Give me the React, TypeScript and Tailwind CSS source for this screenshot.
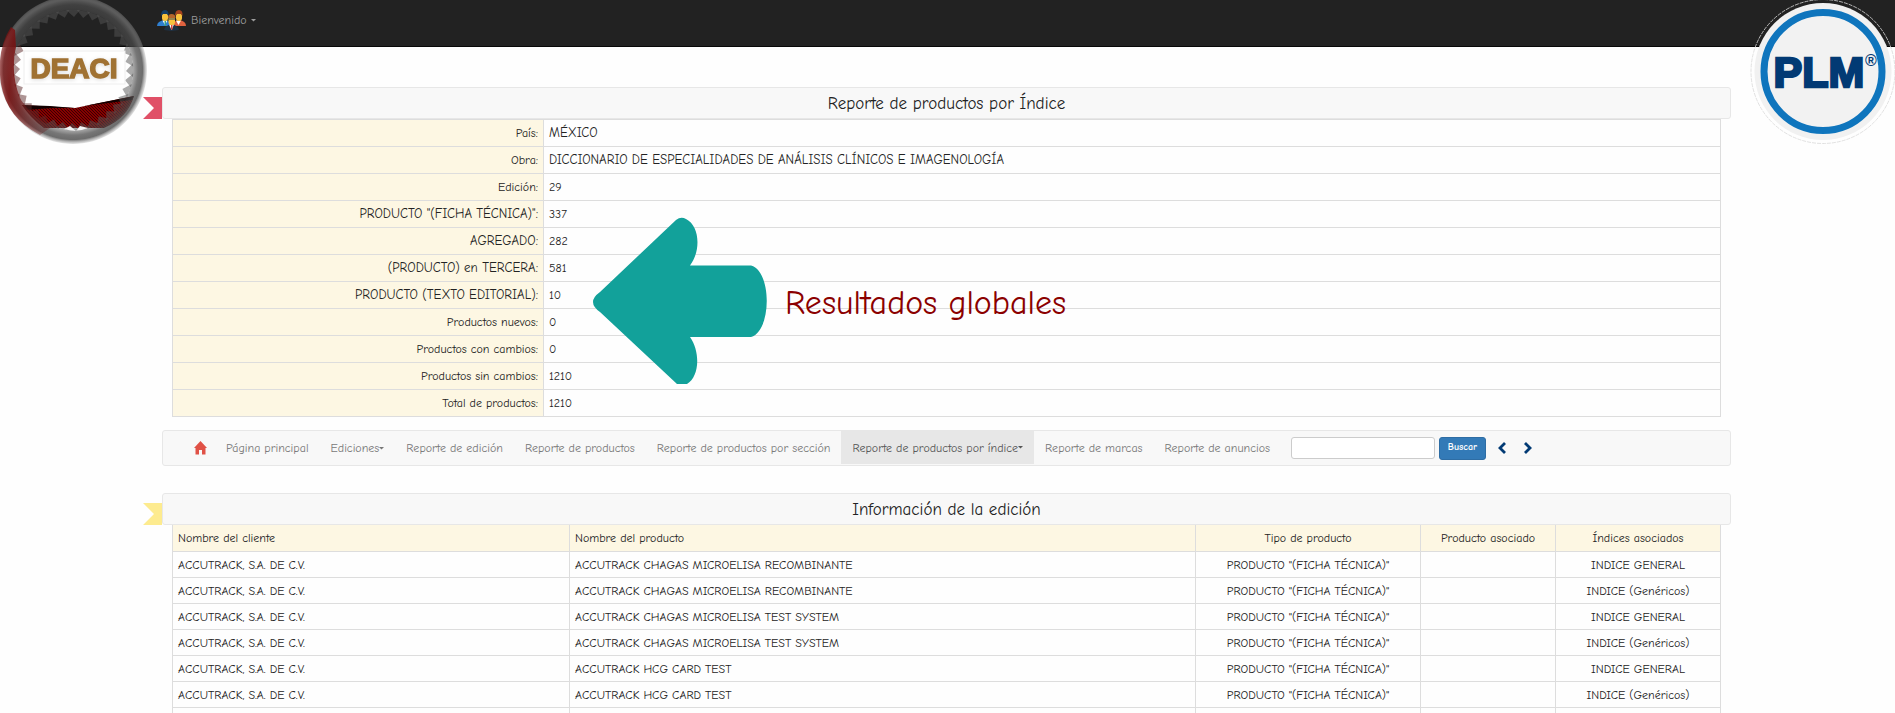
const summary: [string, string][] = [
  ['País:', 'MÉXICO'],
  ['Obra:', 'DICCIONARIO DE ESPECIALIDADES DE ANÁLISIS CLÍNICOS E IMAGENOLOGÍA'],
  ['Edición:', '29'],
  ['PRODUCTO "(FICHA TÉCNICA)":', '337'],
  ['AGREGADO:', '282'],
  ['(PRODUCTO) en TERCERA:', '581'],
  ['PRODUCTO (TEXTO EDITORIAL):', '10'],
  ['Productos nuevos:', '0'],
  ['Productos con cambios:', '0'],
  ['Productos sin cambios:', '1210'],
  ['Total de productos:', '1210'],
];

const products: [string, string][] = [
  ['ACCUTRACK CHAGAS MICROELISA RECOMBINANTE', 'INDICE GENERAL'],
  ['ACCUTRACK CHAGAS MICROELISA RECOMBINANTE', 'INDICE (Genéricos)'],
  ['ACCUTRACK CHAGAS MICROELISA TEST SYSTEM', 'INDICE GENERAL'],
  ['ACCUTRACK CHAGAS MICROELISA TEST SYSTEM', 'INDICE (Genéricos)'],
  ['ACCUTRACK HCG CARD TEST', 'INDICE GENERAL'],
  ['ACCUTRACK HCG CARD TEST', 'INDICE (Genéricos)'],
];

const links: { label: string; caret?: boolean; active?: boolean }[] = [
  { label: 'Página principal' },
  { label: 'Ediciones', caret: true },
  { label: 'Reporte de edición' },
  { label: 'Reporte de productos' },
  { label: 'Reporte de productos por sección' },
  { label: 'Reporte de productos por índice', caret: true, active: true },
  { label: 'Reporte de marcas' },
  { label: 'Reporte de anuncios' },
];

// Capitalised entries are set one step larger than plain ones.
const textSize = (text: string) => (/[A-Z]{3}/.test(text) ? 'text-[13px]' : 'text-xs');

function Caret() {
  return (
    <svg width="5" height="3" viewBox="0 0 5 3" className="shrink-0" aria-hidden="true">
      <path d="M0 0H5L2.5 2.6Z" fill="currentColor" />
    </svg>
  );
}

function People() {
  return (
    <svg width="30" height="21" viewBox="0 0 30 21" aria-hidden="true">
      <path d="M0 16Q0 11 8 10Q14 11 15 16Z" fill="#2f7fd0" />
      <path d="M15 16Q16 11 22 10Q29 11 29 16Z" fill="#e0623f" />
      <path d="M5.500 10.500L8 15L10.500 10.500Z" fill="#fff" />
      <path d="M19 10.500L21.500 15L24 10.500Z" fill="#fff" />
      <rect x="7.500" y="11" width="1.500" height="5" fill="#3aa089" />
      <rect x="5" y="3" width="6" height="8" rx="3" fill="#f9c23c" />
      <path d="M4 6Q4 0 8 0Q12 0 11.500 6L10 4H6Z" fill="#173f66" />
      <rect x="19" y="3" width="6" height="8" rx="3" fill="#f9c23c" />
      <path d="M18 6Q18 0 22 0Q26 0 25.500 6L24 4H20Z" fill="#a4431e" />
      <path d="M7 20Q8 15 14.500 14.500Q21 15 22 20L14.500 21Z" fill="#1f3143" />
      <path d="M12 14.500L14.500 20L17 14.500Z" fill="#fff" />
      <rect x="14" y="15" width="1.500" height="4.500" fill="#d8453a" />
      <rect x="11.500" y="6" width="6.500" height="9" rx="3" fill="#f9c23c" />
      <path d="M11 8Q11 4 14.500 4Q18.500 4 18.500 8Z" fill="#b5652b" />
      <path d="M11.500 9H18" stroke="#34495e" strokeWidth="1" />
    </svg>
  );
}

const teeth = Array.from({ length: 36 }, (_, i) => i * 10);

function DeaciLogo() {
  return (
    <svg width="148" height="146" viewBox="0 0 148 146" role="img" aria-label="DEACI">
      <defs>
        <radialGradient id="rim" cx="73" cy="70" r="74" gradientUnits="userSpaceOnUse">
          <stop offset="0.8" stopColor="#555" stopOpacity="0.45" />
          <stop offset="0.88" stopColor="#4a4a4a" stopOpacity="0.75" />
          <stop offset="0.94" stopColor="#5c5c5c" stopOpacity="0.9" />
          <stop offset="1" stopColor="#a8a8a8" stopOpacity="0.3" />
        </radialGradient>
        <linearGradient id="side" x1="0" y1="0" x2="1" y2="0.2">
          <stop offset="0" stopColor="#8c1414" stopOpacity="0.5" />
          <stop offset="0.3" stopColor="#7a1010" stopOpacity="0.85" />
          <stop offset="1" stopColor="#6a1010" stopOpacity="0.3" />
        </linearGradient>
        <pattern id="weave" width="3" height="3" patternUnits="userSpaceOnUse">
          <rect width="3" height="3" fill="#860000" />
          <path d="M0 0L3 3" stroke="#3a0000" strokeWidth="1" />
        </pattern>
      </defs>
      <path d="M22 105L75 108L134 96Q128 118 104 128H44Q30 118 22 105Z" fill="url(#weave)" />
      <path d="M22 105L50 106L75 108L52 108L26 110ZM84 106L134 96L132 100Z" fill="#120000" />
      <path fillRule="evenodd" d="M73 -4A74 74 0 1 1 72.900 -4ZM73 10A60 60 0 1 0 73.100 10Z" fill="url(#rim)" />
      {teeth.map((a) => (
        <path
          key={a}
          d="M66 10L74 17L80 10Z"
          fill={a > 200 && a < 300 ? '#5b2a2a' : '#555'}
          fillOpacity="0.5"
          transform={`rotate(${a} 73 70)`}
        />
      ))}
      <path
        d="M11 27Q-4 50 1 84Q7 118 40 135L50 128Q26 110 20 98Q10 72 16 47L15 30Z"
        fill="url(#side)"
      />
      <path d="M64 129L70 126L76 131L80 126L88 128Q76 133 64 129Z" fill="#f4f4f4" />
      <rect x="24" y="51" width="101" height="33" fill="#fff" stroke="#eee" />
      <text
        x="74"
        y="78"
        textAnchor="middle"
        fill="#a07233"
        stroke="#a07233"
        strokeWidth="1.500"
        className="font-['Liberation_Sans',Arial,sans-serif] text-[28px] font-bold drop-shadow-sm"
      >
        DEACI
      </text>
    </svg>
  );
}

function PlmLogo() {
  return (
    <svg width="146" height="146" viewBox="0 0 146 146" role="img" aria-label="PLM">
      <circle cx="74" cy="71.500" r="72" fill="none" stroke="#d9d9d9" strokeWidth="0.800" strokeDasharray="4 1" />
      <circle cx="74" cy="71.500" r="68.500" fill="#f1f1f1" />
      <circle cx="74" cy="71.500" r="59" fill="#f2f2f2" stroke="#0f75bd" strokeWidth="7" />
      <text
        x="70"
        y="87"
        textAnchor="middle"
        fill="#023a74"
        stroke="#023a74"
        strokeWidth="2.500"
        className="font-['Liberation_Sans',Arial,sans-serif] text-[43px] font-bold"
      >
        PLM
      </text>
      <text
        x="122"
        y="66"
        textAnchor="middle"
        fill="#023a74"
        className="font-['Liberation_Sans',Arial,sans-serif] text-[16px] font-bold"
      >
        ®
      </text>
    </svg>
  );
}

function Heading({ title, ribbon }: { title: string; ribbon: string }) {
  return (
    <div className="relative flex h-8 items-center justify-center rounded-[3px] border border-[#e7e7e7] bg-[#f8f8f8]">
      <svg
        width="19"
        height="22"
        viewBox="0 0 19 22"
        className={`absolute -bottom-px -left-5 ${ribbon}`}
        aria-hidden="true"
      >
        <path d="M0 0H19V22H0L11 11Z" fill="currentColor" />
      </svg>
      <h2 className="pt-0.5 text-[17px] leading-5">{title}</h2>
    </div>
  );
}

export default function App() {
  return (
    <div className="relative h-screen overflow-x-hidden overflow-y-auto bg-[#fefefe] font-['Comic_Neue','Comic_Sans_MS',cursive] text-xs text-[#222] [scrollbar-width:none]">
      <header className="flex h-[47px] items-center border-b border-[#080808] bg-[#222] pb-1.5 pl-[157px]">
        <button type="button" className="flex items-center gap-1 text-[#9d9d9d]">
          <People />
          <span>Bienvenido</span>
          <Caret />
        </button>
      </header>
      <div className="absolute top-0 left-0">
        <DeaciLogo />
      </div>
      <div className="absolute top-0 right-0">
        <PlmLogo />
      </div>

      <main className="mr-[164px] ml-[162px] pt-10">
        <Heading title="Reporte de productos por Índice" ribbon="text-[#e05067]" />
        <div className="relative px-[10px]">
          <table className="w-full table-fixed border-collapse">
            <tbody>
              {summary.map(([label, value]) => (
                <tr key={label} className="h-[27px]">
                  <th
                    scope="row"
                    className={`w-[371px] border border-[#ddd] bg-[#fdf7e3] px-[5px] py-0 text-right font-normal ${textSize(label)}`}
                  >
                    {label}
                  </th>
                  <td className={`border border-[#ddd] px-[5px] py-0 ${textSize(value)}`}>{value}</td>
                </tr>
              ))}
            </tbody>
          </table>
          <div className="absolute top-[98px] left-[431px] flex items-center gap-[18px]">
            <svg width="174" height="167" viewBox="0 0 174 167" aria-hidden="true">
              <path
                d="M7 75L83 3Q88 -1 93 2C107 9 108 34 97 48.500H158C179 54 179 114 158 120H97C108 136 106 160 94 167H84L7 95Q-7 85 7 75Z"
                fill="#12a19a"
              />
            </svg>
            <p className="pt-1 text-[34px] leading-10 text-[#8b0000]">Resultados globales</p>
          </div>
        </div>

        <nav className="mt-[13px] flex h-9 items-stretch rounded-[3px] border border-[#e7e7e7] bg-[#f8f8f8] pl-[18px]">
          <a href="#inicio" aria-label="Inicio" className="flex items-center pr-2 pl-[13px]">
            <svg width="13" height="14" viewBox="0 0 13 14" aria-hidden="true">
              <path d="M6.500 0L13 7H11.500V13.500H8V9H5V13.500H1.500V7H0Z" fill="#e05146" />
            </svg>
          </a>
          {links.map(({ label, caret, active }) => (
            <a
              key={label}
              href="#reporte"
              className={
                active
                  ? 'mb-px flex items-center bg-[#e7e7e7] px-[11px] whitespace-nowrap text-[#555]'
                  : 'flex items-center px-[11px] whitespace-nowrap text-[#777]'
              }
            >
              {label}
              {caret && <Caret />}
            </a>
          ))}
          <form className="ml-[10px] flex items-center gap-1" onSubmit={(e) => e.preventDefault()}>
            <input
              type="text"
              aria-label="Buscar producto"
              className="h-[22px] w-36 rounded-[3px] border border-[#ccc] bg-white px-1"
            />
            <button
              type="submit"
              className="h-[23px] w-[47px] rounded-[3px] border border-[#2e6da4] bg-[#337ab7] text-[10px] font-bold text-white"
            >
              Buscar
            </button>
          </form>
          <div className="ml-3 flex items-center gap-[18px] text-[#023a74]">
            <button type="button" aria-label="Anterior">
              <svg width="8" height="12" viewBox="0 0 8 12" aria-hidden="true">
                <path d="M7 1L2 6L7 11" fill="none" stroke="currentColor" strokeWidth="2.800" />
              </svg>
            </button>
            <button type="button" aria-label="Siguiente">
              <svg width="8" height="12" viewBox="0 0 8 12" aria-hidden="true">
                <path d="M1 1L6 6L1 11" fill="none" stroke="currentColor" strokeWidth="2.800" />
              </svg>
            </button>
          </div>
        </nav>

        <div className="mt-[27px]">
          <Heading title="Información de la edición" ribbon="text-[#fdeb8f]" />
          <div className="px-[10px]">
            <table className="-mt-px w-full table-fixed border-collapse">
              <colgroup>
                <col className="w-[397px]" />
                <col />
                <col className="w-[225px]" />
                <col className="w-[135px]" />
                <col className="w-[165px]" />
              </colgroup>
              <thead>
                <tr className="h-[27px] bg-[#fdf7e3]">
                  <th className="border border-[#ddd] px-[5px] py-0 text-left font-normal">Nombre del cliente</th>
                  <th className="border border-[#ddd] px-[5px] py-0 text-left font-normal">Nombre del producto</th>
                  <th className="border border-[#ddd] px-[5px] py-0 font-normal">Tipo de producto</th>
                  <th className="border border-[#ddd] px-[5px] py-0 font-normal">Producto asociado</th>
                  <th className="border border-[#ddd] px-[5px] py-0 font-normal">Índices asociados</th>
                </tr>
              </thead>
              <tbody>
                {products.map(([name, index], i) => (
                  <tr key={i} className="h-[26px]">
                    <td className="border border-[#ddd] px-[5px] py-0">ACCUTRACK, S.A. DE C.V.</td>
                    <td className="border border-[#ddd] px-[5px] py-0">{name}</td>
                    <td className="border border-[#ddd] px-[5px] py-0 text-center">PRODUCTO "(FICHA TÉCNICA)"</td>
                    <td className="border border-[#ddd] px-[5px] py-0" />
                    <td className="border border-[#ddd] px-[5px] py-0 text-center">{index}</td>
                  </tr>
                ))}
                <tr className="h-[26px]">
                  <td className="border border-[#ddd]" />
                  <td className="border border-[#ddd]" />
                  <td className="border border-[#ddd]" />
                  <td className="border border-[#ddd]" />
                  <td className="border border-[#ddd]" />
                </tr>
              </tbody>
            </table>
          </div>
        </div>
      </main>
    </div>
  );
}
